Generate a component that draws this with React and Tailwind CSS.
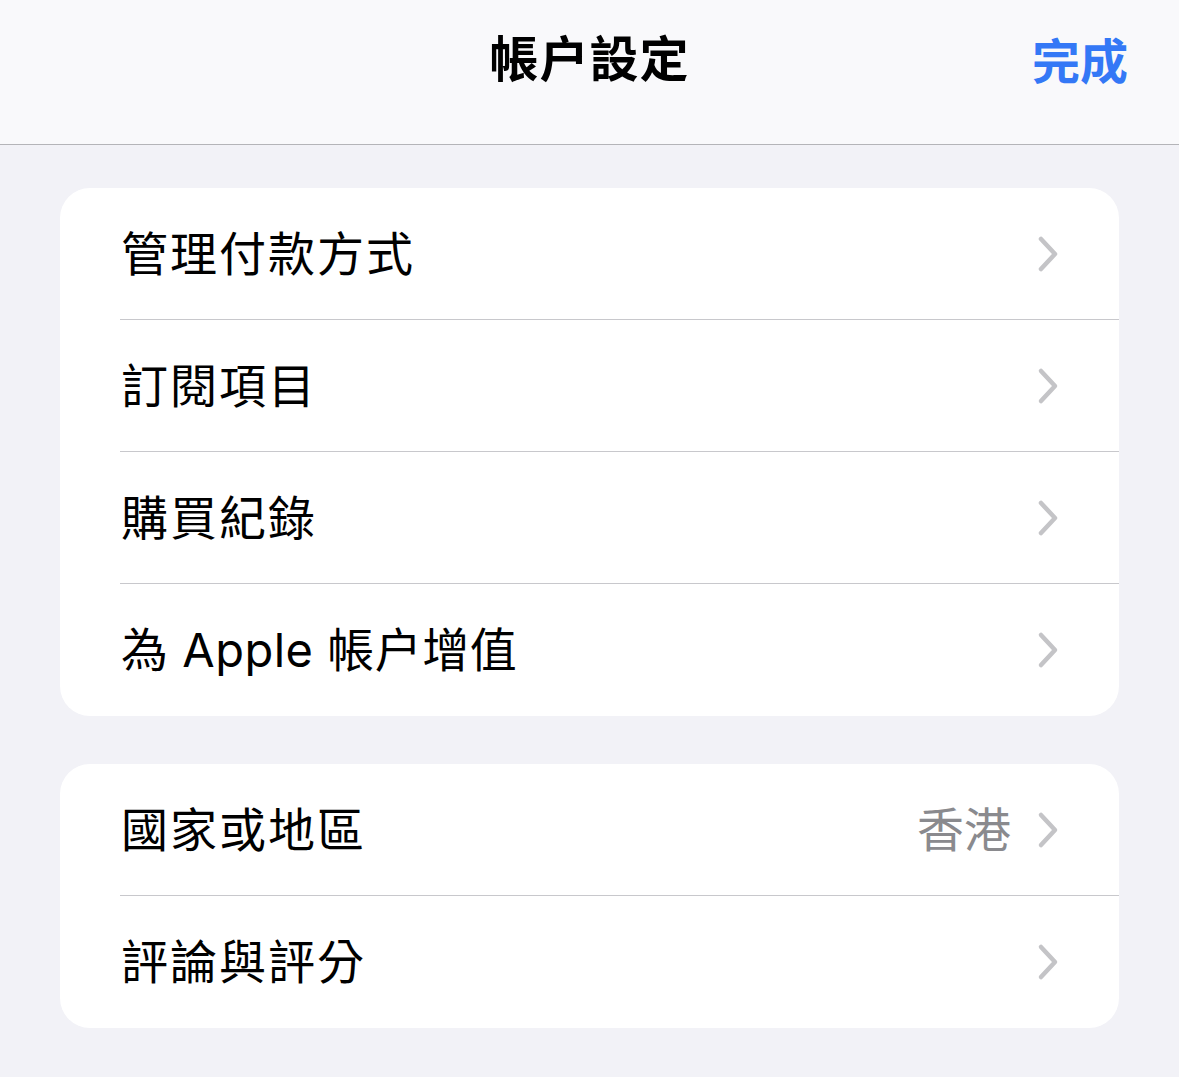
const groups = [
  [
    { label: '管理付款方式' },
    { label: '訂閱項目' },
    { label: '購買紀錄' },
    { label: '為 Apple 帳户增值', latin: true },
  ],
  [
    { label: '國家或地區', value: '香港' },
    { label: '評論與評分' },
  ],
]

function Chevron() {
  return (
    <svg width="22" height="38" viewBox="0 0 22 38" className="shrink-0">
      <path d="M4 4 L18 19 L4 34" fill="none" stroke="#c4c4c7" strokeWidth="4.5" strokeLinecap="round" strokeLinejoin="round" />
    </svg>
  )
}

export default function App() {
  return (
    <div
      className="w-[1179px] h-[1077px] bg-[#f2f2f7] overflow-hidden"
      style={{ fontFamily: 'Inter, "Noto Sans CJK TC", sans-serif' }}
    >
      {/* Nav bar */}
      <div className="relative h-[145px] bg-[#f9f9fb] border-b border-[#b4b4b8] flex items-center justify-center">
        <h1 className="text-[49px] font-bold text-black tracking-[1px] -mt-[24px]">帳户設定</h1>
        <button className="absolute right-[51px] top-[32px] text-[48px] font-semibold text-[#3478f6] leading-none h-[60px]">
          完成
        </button>
      </div>

      <div className="px-[60px] pt-[43px] flex flex-col gap-[48px]">
        {groups.map((rows, gi) => (
          <div key={gi} className="bg-white rounded-[30px] overflow-hidden">
            {rows.map((row, i) => (
              <div key={row.label} className={`pl-[60px] ${i > 0 ? '-mt-px h-[133px]' : 'h-[132px]'}`}>
                <div
                  className={`h-full flex items-center pr-[60px] ${i > 0 ? 'border-t border-[#c8c8cc]' : ''}`}
                >
                  <span
                    className={`flex-1 text-[47px] text-black ml-[1px] ${row.latin ? 'tracking-[0.5px]' : 'tracking-[2px]'}`}
                  >
                    {row.label}
                  </span>
                  {row.value && (
                    <span className="text-[47px] text-[#8a8a8e] mr-[26px]">{row.value}</span>
                  )}
                  <Chevron />
                </div>
              </div>
            ))}
          </div>
        ))}
      </div>
    </div>
  )
}
